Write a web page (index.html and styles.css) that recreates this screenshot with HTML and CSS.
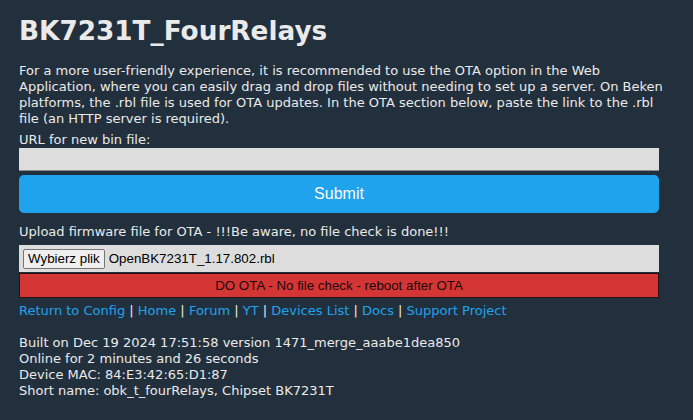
FILE: index.html
```html
<!DOCTYPE html>
<html>
<head>
<meta charset="utf-8">
<title>BK7231T_FourRelays</title>
<link rel="stylesheet" href="styles.css">
</head>
<body>
<div class="page">
  <h1 class="title">BK7231T_FourRelays</h1>
  <p class="intro">For a more user-friendly experience, it is recommended to use the OTA option in the Web<br>Application, where you can easily drag and drop files without needing to set up a server. On Beken<br>platforms, the .rbl file is used for OTA updates. In the OTA section below, paste the link to the .rbl<br>file (an HTTP server is required).</p>
  <form class="url-form">
    <label class="label">URL for new bin file:</label>
    <input class="url-input" type="text" value="">
    <button class="btn-submit" type="button">Submit</button>
  </form>
  <div class="label upload-label">Upload firmware file for OTA - !!!Be aware, no file check is done!!!</div>
  <div class="file-row">
    <span class="file-btn">Wybierz plik</span>
    <span class="file-name">OpenBK7231T_1.17.802.rbl</span>
  </div>
  <button class="btn-ota" type="button">DO OTA - No file check - reboot after OTA</button>
  <nav class="links">
    <a href="#">Return to Config</a> | <a href="#">Home</a> | <a href="#">Forum</a> | <a href="#">YT</a> | <a href="#">Devices List</a> | <a href="#">Docs</a> | <a href="#">Support Project</a>
  </nav>
  <div class="info">
    <div>Built on Dec 19 2024 17:51:58 version 1471_merge_aaabe1dea850</div>
    <div>Online for 2 minutes and 26 seconds</div>
    <div>Device MAC: 84:E3:42:65:D1:87</div>
    <div>Short name: obk_t_fourRelays, Chipset BK7231T</div>
  </div>
</div>
</body>
</html>
```

FILE: styles.css
```css
html, body {
  margin: 0;
  padding: 0;
}
body {
  background: #22303d;
  color: #eaeaea;
  font-family: "DejaVu Sans", Verdana, sans-serif;
  font-size: 13px;
  line-height: 16px;
}
.page {
  width: 640px;
  margin-left: 19px;
  padding-top: 14px;
}
.title {
  margin: 0;
  font-size: 26.3px;
  line-height: 34px;
  font-weight: bold;
  color: #eaeaea;
}
.intro {
  margin: 15px 0 0 0;
  white-space: nowrap;
}
.url-form {
  margin: 5px 0 0 0;
  display: flex;
  flex-direction: column;
}
.label {
  display: block;
}
.url-input {
  margin: 0;
  box-sizing: border-box;
  width: 100%;
  height: 23px;
  background: #dddddd;
  border: 0;
  border-bottom: 1px solid #8a8a8a;
  padding: 0 4px;
}
.btn-submit {
  margin-top: 4px;
  width: 100%;
  height: 38px;
  border: 0;
  border-radius: 5px;
  background: #1fa3ec;
  color: #fafafa;
  font-family: "Liberation Sans", Arial, sans-serif;
  font-size: 16px;
}
.upload-label {
  margin-top: 11px;
}
.file-row {
  margin-top: 5px;
  height: 27px;
  background: #dddddd;
  display: flex;
  align-items: center;
  padding-left: 4px;
  font-family: "Liberation Sans", Arial, sans-serif;
  font-size: 13.33px;
  color: #000;
}
.file-btn {
  box-sizing: border-box;
  height: 20px;
  line-height: 18px;
  padding: 0 4px;
  background: #efefef;
  border: 1px solid #767676;
  border-radius: 2px;
}
.file-name {
  margin-left: 4px;
}
.btn-ota {
  display: block;
  margin-top: 1px;
  width: 100%;
  height: 25px;
  background: #d43535;
  border: 1px solid #2a1010;
  color: #1a0808;
  font-family: "Liberation Sans", Arial, sans-serif;
  font-size: 13.33px;
  padding: 0;
}
.links {
  margin-top: 5px;
  color: #eaeaea;
}
.links a {
  color: #1fa3ec;
  text-decoration: none;
}
.info {
  margin-top: 16px;
}
```
